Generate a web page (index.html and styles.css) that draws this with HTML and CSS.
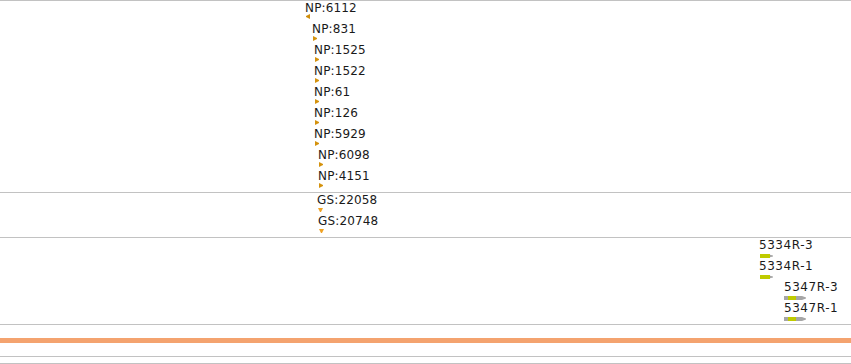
FILE: index.html
```html
<!DOCTYPE html>
<html>
<head>
<meta charset="utf-8">
<link rel="stylesheet" href="styles.css">
</head>
<body>
<div class="tracks">
  <div class="track track-np">
    <div class="feat" style="margin-left:305px"><div class="label">NP:6112</div><div class="glyph"><span class="tri tri-left"></span></div></div>
    <div class="feat" style="margin-left:312px"><div class="label">NP:831</div><div class="glyph"><span class="tri tri-right"></span></div></div>
    <div class="feat" style="margin-left:314px"><div class="label">NP:1525</div><div class="glyph"><span class="tri tri-right"></span></div></div>
    <div class="feat" style="margin-left:314px"><div class="label">NP:1522</div><div class="glyph"><span class="tri tri-right"></span></div></div>
    <div class="feat" style="margin-left:314px"><div class="label">NP:61</div><div class="glyph"><span class="tri tri-right"></span></div></div>
    <div class="feat" style="margin-left:314px"><div class="label">NP:126</div><div class="glyph"><span class="tri tri-right"></span></div></div>
    <div class="feat" style="margin-left:314px"><div class="label">NP:5929</div><div class="glyph"><span class="tri tri-right"></span></div></div>
    <div class="feat" style="margin-left:318px"><div class="label">NP:6098</div><div class="glyph"><span class="tri tri-right"></span></div></div>
    <div class="feat" style="margin-left:318px"><div class="label">NP:4151</div><div class="glyph"><span class="tri tri-right"></span></div></div>
  </div>
  <div class="track track-gs">
    <div class="feat" style="margin-left:317px"><div class="label">GS:22058</div><div class="glyph"><span class="tri tri-down"></span></div></div>
    <div class="feat" style="margin-left:318px"><div class="label">GS:20748</div><div class="glyph"><span class="tri tri-down"></span></div></div>
  </div>
  <div class="track track-gene">
    <div class="feat" style="margin-left:759px"><div class="label label-gene">5334R-3</div><div class="glyph"><span class="gene"><span class="seg green w10"></span><span class="tip small"></span></span></div></div>
    <div class="feat" style="margin-left:759px"><div class="label label-gene">5334R-1</div><div class="glyph"><span class="gene"><span class="seg green w10"></span><span class="tip small"></span></span></div></div>
    <div class="feat" style="margin-left:784px"><div class="label label-gene">5347R-3</div><div class="glyph"><span class="gene gene-long"><span class="seg grey w4"></span><span class="seg green w8"></span><span class="seg grey w6"></span><span class="tip"></span></span></div></div>
    <div class="feat" style="margin-left:784px"><div class="label label-gene">5347R-1</div><div class="glyph"><span class="gene gene-long"><span class="seg grey w4"></span><span class="seg green w8"></span><span class="seg grey w6"></span><span class="tip"></span></span></div></div>
  </div>
  <div class="track track-band">
    <div class="band"></div>
  </div>
  <div class="track track-last"></div>
</div>
</body>
</html>
```
FILE: styles.css
```css
html, body {
  margin: 0;
  padding: 0;
  background: #ffffff;
}
body {
  font-family: "DejaVu Sans", Verdana, sans-serif;
  font-size: 12px;
  color: #1a1a1a;
  width: 851px;
  height: 364px;
  overflow: hidden;
}
.tracks {
  display: flex;
  flex-direction: column;
}
.track {
  border-top: 1px solid #c2c2c2;
  display: flex;
  flex-direction: column;
  box-sizing: border-box;
}
.track-np { height: 192px; }
.track-gs { height: 45px; }
.track-gene { height: 87px; }
.track-band { height: 32px; }
.track-last {
  height: 8px;
  border-bottom: 1px solid #c2c2c2;
}
.feat {
  display: flex;
  flex-direction: column;
  align-items: flex-start;
  height: 21px;
}
.label {
  padding-top: 1px;
  height: 13px;
  line-height: 13px;
  white-space: nowrap;
  letter-spacing: 0.15px;
}
.label-gene {
  letter-spacing: 0.55px;
}
.glyph {
  height: 7px;
  display: flex;
  align-items: flex-start;
  padding-left: 1px;
}
.tri {
  display: block;
}
.tri-left {
  margin-top: -1px;
  width: 4px;
  height: 5px;
  background: #cf8e0c;
  clip-path: polygon(100% 0, 0 40%, 0 60%, 100% 100%);
}
.tri-right {
  width: 4px;
  height: 5px;
  background: #d4920e;
  clip-path: polygon(0 0, 100% 40%, 100% 60%, 0 100%);
}
.tri-down {
  margin-top: 1px;
  width: 5px;
  height: 4px;
  background: #f0a224;
  clip-path: polygon(0 0, 100% 0, 60% 100%, 40% 100%);
}
.gene {
  display: flex;
  margin-top: 2px;
  height: 4px;
}
.gene-long {
  margin-left: -1px;
}
.seg {
  display: block;
  height: 4px;
}
.green { background: #bfcb00; }
.grey { background: #a6a6a6; }
.w4 { width: 4px; }
.w6 { width: 6px; }
.w8 { width: 8px; }
.w10 { width: 10px; }
.tip {
  display: block;
  width: 4px;
  height: 4px;
  background: #a6a6a6;
  clip-path: polygon(0 0, 100% 40%, 100% 60%, 0 100%);
}
.tip.small {
  width: 3px;
  clip-path: polygon(0 20%, 100% 40%, 100% 60%, 0 80%);
}
.band {
  margin-top: 13px;
  height: 5px;
  background: #f4a36f;
}
```
